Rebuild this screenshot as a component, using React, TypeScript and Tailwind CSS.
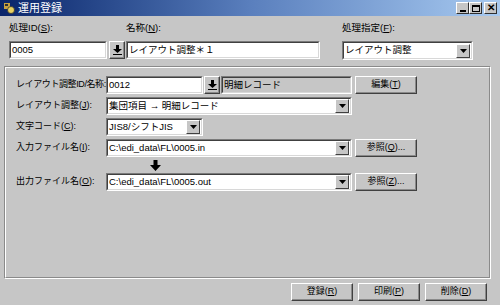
import React from "react";

const font = { fontFamily: '"Liberation Sans", "Noto Sans CJK JP", sans-serif' };

function U({ c }: { c: string }) {
  return <span className="underline underline-offset-1">{c}</span>;
}

function Sunken({ className = "", children, gray = false }: { className?: string; children?: React.ReactNode; gray?: boolean }) {
  return (
    <div
      className={`flex items-center h-[18px] border border-t-[#7a7a7a] border-l-[#7a7a7a] border-b-white border-r-white ${className}`}
    >
      <div
        className={`flex-1 h-full flex items-center px-[1px] border border-t-[#404040] border-l-[#404040] border-b-[#d8d8d8] border-r-[#d8d8d8] ${
          gray ? "bg-[#c6c6c6]" : "bg-white"
        } text-[9.5px] text-black overflow-hidden whitespace-nowrap`}
      >
        {children}
      </div>
    </div>
  );
}

function ArrowBtn() {
  return (
    <div className="w-[14px] h-[14px] mr-[1px] flex items-center justify-center bg-[#c6c6c6] border border-t-white border-l-white border-b-[#404040] border-r-[#404040]">
      <svg width="7" height="4" viewBox="0 0 7 4">
        <path d="M0 0h7L3.5 4z" fill="#000" />
      </svg>
    </div>
  );
}

function Select({ className = "", children }: { className?: string; children?: React.ReactNode }) {
  return (
    <div
      className={`flex items-center h-[18px] border border-t-[#7a7a7a] border-l-[#7a7a7a] border-b-white border-r-white ${className}`}
    >
      <div className="flex-1 h-full flex items-center bg-white border border-t-[#404040] border-l-[#404040] border-b-[#d8d8d8] border-r-[#d8d8d8]">
        <div className="flex-1 px-[1px] text-[9.5px] overflow-hidden whitespace-nowrap">{children}</div>
        <ArrowBtn />
      </div>
    </div>
  );
}

function Btn({ className = "", children }: { className?: string; children?: React.ReactNode }) {
  return (
    <div
      className={`h-[18px] flex items-center justify-center bg-[#c6c6c6] border border-t-white border-l-white border-b-[#404040] border-r-[#404040] shadow-[inset_-1px_-1px_0_#8a8a8a] text-[9px] text-black ${className}`}
    >
      {children}
    </div>
  );
}

function DownBtn() {
  return (
    <div className="w-[16px] h-[18px] flex items-center justify-center bg-[#c6c6c6] border border-t-white border-l-white border-b-[#404040] border-r-[#404040] shadow-[inset_-1px_-1px_0_#8a8a8a]">
      <svg width="9" height="10" viewBox="0 0 9 10">
        <path d="M3 0h3v4h3L4.5 8 0 4h3z" fill="#000" />
        <rect x="0" y="9" width="9" height="1" fill="#000" />
      </svg>
    </div>
  );
}

function Label({ children, tight = false }: { children: React.ReactNode; tight?: boolean }) {
  return (
    <div className={`w-[90px] text-[9px] text-black whitespace-nowrap ${tight ? "tracking-[-0.4px]" : ""}`}>
      {children}
    </div>
  );
}

function TitleBtn({ children }: { children: React.ReactNode }) {
  return (
    <div className="w-[13px] h-[12px] flex items-center justify-center bg-[#c6c6c6] border border-t-white border-l-white border-b-[#303030] border-r-[#303030]">
      {children}
    </div>
  );
}

export default function App() {
  return (
    <div className="w-[500px] h-[305px] bg-[#c6c6c6] flex flex-col overflow-hidden" style={font}>
      {/* title bar */}
      <div className="h-[16px] shrink-0 flex items-center bg-gradient-to-r from-[#0a246a] via-[#5a7fbd] to-[#a8caf0] pl-[3px] pr-[3px]">
        <svg width="12" height="12" viewBox="0 0 12 12" className="mr-[3px]">
          <rect x="1" y="1" width="6" height="6" fill="#c8a040" />
          <circle cx="8" cy="8" r="3.5" fill="#e8d060" stroke="#303030" strokeWidth="0.8" />
          <rect x="2" y="2" width="3" height="2" fill="#303030" />
        </svg>
        <span className="text-white text-[11px] leading-none">運用登録</span>
        <div className="ml-auto flex">
          <TitleBtn>
            <div className="w-[6px] h-[2px] bg-black mt-[5px]" />
          </TitleBtn>
          <TitleBtn>
            <div className="w-[8px] h-[7px] border border-black border-t-2" />
          </TitleBtn>
          <div className="w-[2px]" />
          <TitleBtn>
            <span className="text-[10px] font-bold leading-none">✕</span>
          </TitleBtn>
        </div>
      </div>

      {/* top fields */}
      <div className="h-[50px] shrink-0 flex pl-[9px] pt-[5px] text-[9.5px]">
        <div className="flex flex-col w-[117px]">
          <div className="h-[14px] leading-[14px]">
            処理ID(<U c="S" />):
          </div>
          <div className="flex items-center gap-[2px] mt-[6px]">
            <Sunken className="w-[98px]">0005</Sunken>
            <DownBtn />
          </div>
        </div>
        <div className="flex flex-col w-[216px]">
          <div className="h-[14px] leading-[14px]">
            名称(<U c="N" />):
          </div>
          <Sunken className="w-[194px] mt-[6px]">レイアウト調整＊１</Sunken>
        </div>
        <div className="flex flex-col">
          <div className="h-[14px] leading-[14px]">
            処理指定(<U c="F" />):
          </div>
          <Select className="w-[131px] mt-[6px] !h-[19px]">レイアウト調整</Select>
        </div>
      </div>

      {/* panel */}
      <div className="shrink-0 mx-[4px] h-[213px] w-[487px] border border-t-[#8a8a8a] border-l-[#8a8a8a] border-b-white border-r-white">
        <div className="h-full w-full border border-t-white border-l-white border-b-[#8a8a8a] border-r-[#8a8a8a] pl-[10px] pt-[8px] flex flex-col gap-[3px]">
          <div className="flex items-center">
            <Label tight>レイアウト調整ID/名称:</Label>
            <Sunken className="w-[97px]">0012</Sunken>
            <div className="ml-[1px]">
              <DownBtn />
            </div>
            <Sunken className="w-[131px] ml-[1px]" gray>
              明細レコード
            </Sunken>
            <Btn className="w-[62px] ml-[3px]">
              編集(<U c="T" />)
            </Btn>
          </div>
          <div className="flex items-center">
            <Label>
              レイアウト調整(<U c="J" />):
            </Label>
            <Select className="w-[246px]">集団項目 → 明細レコード</Select>
          </div>
          <div className="flex items-center">
            <Label>
              文字コード(<U c="C" />):
            </Label>
            <Select className="w-[97px]">JIS8/シフトJIS</Select>
          </div>
          <div className="flex items-center">
            <Label>
              入力ファイル名(<U c="I" />):
            </Label>
            <Select className="w-[246px]">C:\edi_data\FL\0005.in</Select>
            <Btn className="w-[62px] ml-[3px]">
              参照(<U c="Q" />)...
            </Btn>
          </div>
          <div className="flex pl-[134px] h-[10px] items-center">
            <svg width="11" height="11" viewBox="0 0 11 11">
              <path d="M3.5 0h4v5h3.5L5.5 11 0 5h3.5z" fill="#000" />
            </svg>
          </div>
          <div className="flex items-center">
            <Label>
              出力ファイル名(<U c="O" />):
            </Label>
            <Select className="w-[246px]">C:\edi_data\FL\0005.out</Select>
            <Btn className="w-[62px] ml-[3px]">
              参照(<U c="Z" />)...
            </Btn>
          </div>
        </div>
      </div>

      {/* footer */}
      <div className="flex justify-end gap-[5px] pr-[13px] mt-[4px]">
        <Btn className="w-[62px]">
          登録(<U c="R" />)
        </Btn>
        <Btn className="w-[62px]">
          印刷(<U c="P" />)
        </Btn>
        <Btn className="w-[62px]">
          削除(<U c="D" />)
        </Btn>
      </div>
    </div>
  );
}
